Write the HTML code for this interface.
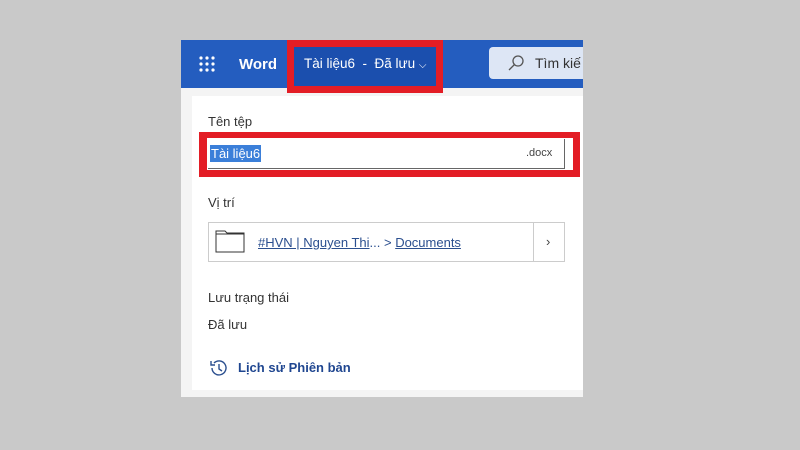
<!DOCTYPE html>
<html><head><meta charset="utf-8"><style>
*{margin:0;padding:0;box-sizing:border-box}
body{width:800px;height:450px;background:#c9c9c9;position:relative;overflow:hidden;font-family:"Liberation Sans","DejaVu Sans",sans-serif}
.a{position:absolute}
</style></head><body>
<div class="a" style="left:181px;top:40px;width:402px;height:357px;background:#f4f4f4"></div>
<div class="a" style="left:181px;top:40px;width:402px;height:48px;background:#245dbf"></div>
<svg class="a" style="left:198px;top:55px" width="18" height="18"><g fill="#fff"><circle cx="3" cy="3" r="1.6"/><circle cx="9" cy="3" r="1.6"/><circle cx="15" cy="3" r="1.6"/><circle cx="3" cy="9" r="1.6"/><circle cx="9" cy="9" r="1.6"/><circle cx="15" cy="9" r="1.6"/><circle cx="3" cy="15" r="1.6"/><circle cx="9" cy="15" r="1.6"/><circle cx="15" cy="15" r="1.6"/></g></svg>
<div class="a" style="left:239px;top:56px;color:#fff;font-weight:bold;font-size:15px">Word</div>
<div class="a" style="left:287px;top:40px;width:156px;height:53px;background:#e31d25"></div>
<div class="a" style="left:294px;top:47px;width:142px;height:39px;background:#1b4fae"></div>
<div class="a" style="left:304px;top:56px;color:#fff;font-size:13.5px;white-space:nowrap">Tài liệu6 &nbsp;-&nbsp; Đã lưu <span style="font-size:10px">⌵</span></div>
<div class="a" style="left:489px;top:47px;width:94px;height:32px;background:#dde6f5;border-radius:4px 0 0 4px"></div>
<svg class="a" style="left:507px;top:54px" width="18" height="18"><circle cx="11" cy="7" r="5" fill="none" stroke="#555" stroke-width="1.3"/><path d="M7.5 10.5L2 16" stroke="#555" stroke-width="1.3"/></svg>
<div class="a" style="left:535px;top:55px;color:#333;font-size:14px;white-space:nowrap">Tìm kiế</div>
<div class="a" style="left:192px;top:96px;width:391px;height:294px;background:#fff"></div>
<div class="a" style="left:208px;top:114px;color:#333;font-size:13px">Tên tệp</div>
<div class="a" style="left:199px;top:132px;width:381px;height:45px;background:#e31d25"></div>
<div class="a" style="left:207px;top:138px;width:366px;height:32px;background:#fff"></div>
<div class="a" style="left:208px;top:139px;width:357px;height:30px;border-right:1px solid #666;border-bottom:1px solid #666"></div>
<div class="a" style="left:210px;top:145px;background:#3b7fd9;color:#fff;font-size:13px;padding:0 1px;line-height:17px">Tài liệu6</div>
<div class="a" style="left:526px;top:147px;color:#444;font-size:11px">.docx</div>
<div class="a" style="left:208px;top:195px;color:#333;font-size:13px">Vị trí</div>
<div class="a" style="left:208px;top:222px;width:357px;height:40px;border:1px solid #ccc"></div>
<div class="a" style="left:533px;top:222px;width:1px;height:40px;background:#ccc"></div>
<svg class="a" style="left:215px;top:230px" width="30" height="24"><path d="M1 1h9l2 2h17v19H1z" fill="none" stroke="#333" stroke-width="1"/><path d="M1 4h28" stroke="#333"/></svg>
<div class="a" style="left:258px;top:235px;color:#2b4f8f;font-size:13px;white-space:nowrap"><u>#HVN | Nguyen Thi</u>... &gt; <u>Documents</u></div>
<div class="a" style="left:546px;top:234px;color:#444;font-size:13px">›</div>
<div class="a" style="left:208px;top:290px;color:#333;font-size:13px">Lưu trạng thái</div>
<div class="a" style="left:208px;top:317px;color:#333;font-size:13px">Đã lưu</div>
<svg class="a" style="left:209px;top:358px" width="20" height="20"><path d="M3 10a7 7 0 1 0 2-5" fill="none" stroke="#2b4f8f" stroke-width="1.4"/><path d="M2 3v4h4" fill="none" stroke="#2b4f8f" stroke-width="1.4"/><path d="M10 6v5l3 2" fill="none" stroke="#2b4f8f" stroke-width="1.4"/></svg>
<div class="a" style="left:238px;top:360px;color:#1f4690;font-size:13px;font-weight:bold">Lịch sử Phiên bản</div>
</body></html>
